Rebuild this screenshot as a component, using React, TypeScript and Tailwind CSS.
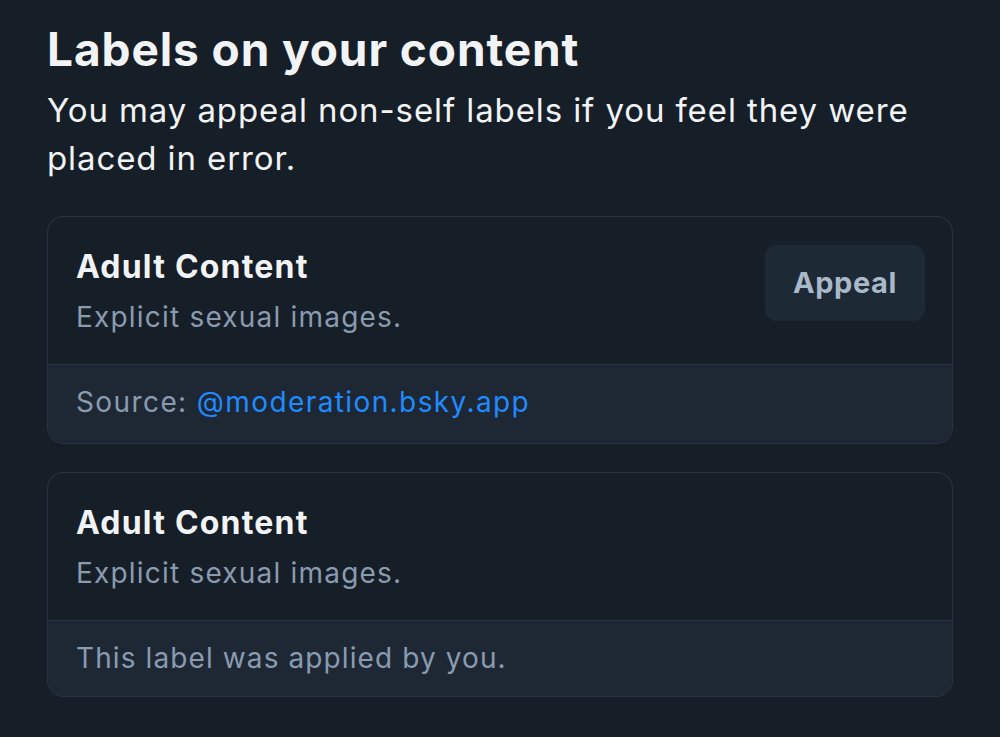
import React from "react";

type Label = {
  title: string;
  description: string;
  selfApplied: boolean;
  source?: string;
};

const labels: Label[] = [
  {
    title: "Adult Content",
    description: "Explicit sexual images.",
    selfApplied: false,
    source: "@moderation.bsky.app",
  },
  {
    title: "Adult Content",
    description: "Explicit sexual images.",
    selfApplied: true,
  },
];

function LabelCard({ label }: { label: Label }) {
  return (
    <div className="border border-[#2a3543] rounded-[16px] overflow-hidden">
      <div className="flex justify-between items-start pl-[28px] pr-[27px] pt-[30px] h-[147px]">
        <div className="flex flex-col gap-[10px]">
          <span className="text-[32px] leading-[40px] font-bold tracking-[1.2px] text-[#f1f3f5]">
            {label.title}
          </span>
          <span className="text-[28px] leading-[40px] tracking-[1.2px] text-[#8a9bb0]">
            {label.description}
          </span>
        </div>
        {!label.selfApplied && (
          <button className="-mt-[2px] bg-[#1e2936] rounded-[12px] w-[160px] h-[76px] text-[29px] font-bold tracking-[0.6px] text-[#aab9ca] cursor-pointer">
            Appeal
          </button>
        )}
      </div>
      <div
        className={
          "bg-[#1e2834] border-t border-[#2a3543] px-[28px] pt-[17px] text-[28px] leading-[40px] text-[#8a9bb0] " +
          (label.selfApplied ? "pb-[18px] tracking-[1.1px]" : "pb-[21px] tracking-[1.4px]")
        }
      >
        {label.selfApplied ? (
          "This label was applied by you."
        ) : (
          <>
            Source: <span className="text-[#208bfe]">{label.source}</span>
          </>
        )}
      </div>
    </div>
  );
}

export default function App() {
  return (
    <div
      className="min-h-[737px] w-[1000px] bg-[#161e27] px-[47px] pt-[21px]"
      style={{ fontFamily: "Inter, 'Noto Sans', sans-serif" }}
    >
      <h1 className="text-[46px] leading-[56px] font-bold text-[#f1f3f5] tracking-[0.9px]">
        Labels on your content
      </h1>
      <p className="text-[33px] leading-[48px] tracking-[0.9px] text-[#f1f3f5] mt-[9px] pr-[20px]">
        You may appeal non-self labels if you feel they were placed in error.
      </p>
      <div className="flex flex-col gap-[28px] mt-[34px]">
        {labels.map((l, i) => (
          <LabelCard key={i} label={l} />
        ))}
      </div>
    </div>
  );
}
